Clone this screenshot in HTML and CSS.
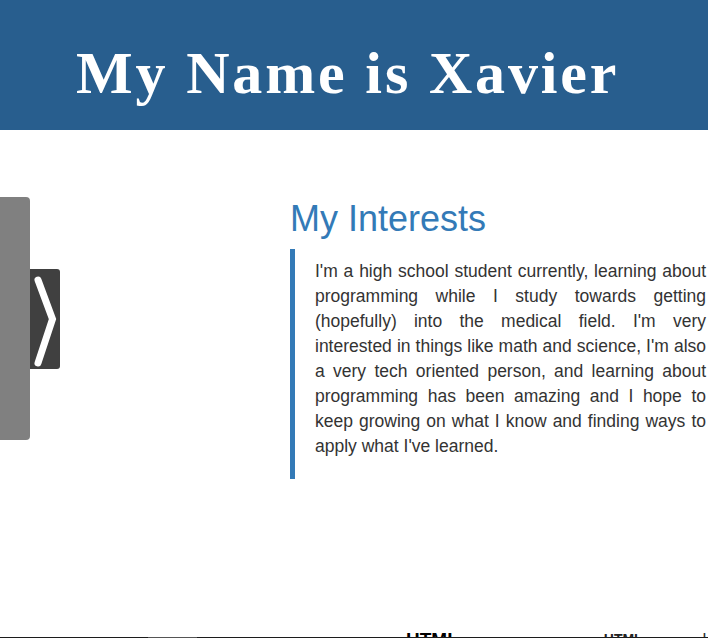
FILE: index.html
```html
<!DOCTYPE html>
<html lang="en">
<head>
<meta charset="utf-8">
<title>My Name is Xavier</title>
<link rel="stylesheet" href="styles.css">
</head>
<body>
<header class="hero">
  <h1 class="hero-title">My Name is Xavier</h1>
</header>
<main class="content">
  <aside class="side">
    <div class="side-panel"></div>
    <button class="side-toggle" type="button" aria-label="Open">
      <svg width="30" height="100" viewBox="0 0 30 100" aria-hidden="true">
        <polyline points="8,11 22.5,50 8,94" fill="none" stroke="#fff" stroke-width="7" stroke-linecap="round" stroke-linejoin="miter"/>
      </svg>
    </button>
  </aside>
  <section class="interests">
    <h2 class="interests-title">My Interests</h2>
    <blockquote class="quote">
      <p>I'm a high school student currently, learning about programming while I study towards getting (hopefully) into the medical field. I'm very interested in things like math and science, I'm also a very tech oriented person, and learning about programming has been amazing and I hope to keep growing on what I know and finding ways to apply what I've learned.</p>
    </blockquote>
  </section>
</main>
<section class="skills">
  <span class="skill skill-big">HTML</span>
  <span class="skill skill-small">HTML</span>
  <span class="skill skill-tiny">|</span>
</section>
</body>
</html>
```
FILE: styles.css
```css
html, body {
  margin: 0;
  padding: 0;
}
body {
  font-family: "Liberation Sans", Arial, sans-serif;
  color: #333;
  background: #fff;
  overflow: hidden;
}
.hero {
  box-sizing: border-box;
  height: 130px;
  background: #285e8e;
  padding: 43px 0 0 76px;
}
.hero-title {
  margin: 0;
  font-family: "Liberation Serif", "Times New Roman", serif;
  font-weight: bold;
  font-size: 60px;
  line-height: 60px;
  letter-spacing: 2.85px;
  color: #fff;
}
.content {
  display: grid;
  grid-template-columns: 290px 1fr;
  padding-top: 49px;
}
.side {
  display: flex;
  align-items: center;
  align-self: start;
  margin-top: 18px;
}
.side-panel {
  width: 30px;
  height: 243px;
  background: #808080;
  border-radius: 0 4px 4px 0;
}
.side-toggle {
  width: 30px;
  height: 100px;
  padding: 0;
  border: 0;
  background: #404040;
  border-radius: 0 3px 3px 0;
  display: flex;
}
.interests {
  min-width: 0;
}
.interests-title {
  margin: 20px 0 10px;
  font-family: "Liberation Sans", Arial, sans-serif;
  font-weight: normal;
  font-size: 36px;
  line-height: 1.1;
  color: #337ab7;
}
.quote {
  margin: 0 0 20px;
  padding: 10px 2px 10px 20px;
  border-left: 5px solid #337ab7;
  font-size: 17.5px;
  line-height: 25px;
}
.quote p {
  margin: 0 0 10px;
  text-align: justify;
}
.skills {
  position: relative;
  display: flex;
  align-items: flex-start;
  margin-top: 130px;
  padding-left: 406px;
  height: 40px;
}
.skills::after {
  content: "";
  position: absolute;
  left: 0;
  right: 0;
  top: 8px;
  height: 2px;
  background: linear-gradient(to right, #1c1c1c 0, #1c1c1c 148px, #555 148px, #555 197px, #1c1c1c 197px);
}
.skill {
  font-family: "Liberation Sans", Arial, sans-serif;
  font-weight: bold;
  color: #000;
  line-height: 1.15;
}
.skill-big {
  font-size: 19px;
}
.skill-small {
  font-size: 14px;
  margin-left: 145px;
  margin-top: 2px;
  color: #222;
}
.skill-tiny {
  font-size: 12px;
  margin-left: 60px;
  margin-top: 3px;
  color: #333;
}
```
